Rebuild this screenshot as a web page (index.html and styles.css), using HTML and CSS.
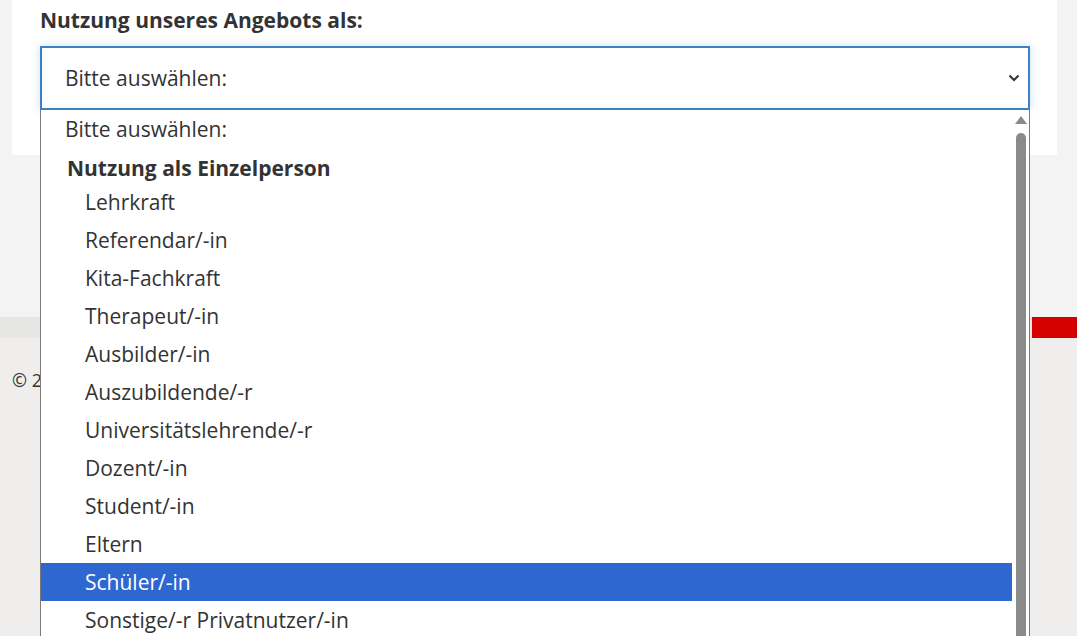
FILE: index.html
```html
<!DOCTYPE html>
<html lang="de">

<head>
    <meta charset="UTF-8">
    <meta name="viewport" content="width=device-width, initial-scale=1.0">
    <title>Registrierung</title>
    <link rel="stylesheet" href="styles.css">
</head>

<body>
    <main class="page">
        <section class="card">
            <label class="field-label" for="usage">Nutzung unseres Angebots als:</label>

            <div class="select-wrap">
                <div class="select" id="usage" role="combobox" aria-expanded="true">
                    <span class="select-value">Bitte auswählen:</span>
                    <svg class="select-arrow" width="12" height="8" viewBox="0 0 12 8">
                        <path d="M1.5 1.5 L6 6 L10.5 1.5" fill="none" stroke="#333" stroke-width="2" />
                    </svg>
                </div>

                <div class="listbox" role="listbox">
                    <div class="options">
                        <div class="option">Bitte auswählen:</div>
                        <div class="optgroup">Nutzung als Einzelperson</div>
                        <div class="option nested">Lehrkraft</div>
                        <div class="option nested">Referendar/-in</div>
                        <div class="option nested">Kita-Fachkraft</div>
                        <div class="option nested">Therapeut/-in</div>
                        <div class="option nested">Ausbilder/-in</div>
                        <div class="option nested">Auszubildende/-r</div>
                        <div class="option nested">Universitätslehrende/-r</div>
                        <div class="option nested">Dozent/-in</div>
                        <div class="option nested">Student/-in</div>
                        <div class="option nested">Eltern</div>
                        <div class="option nested selected">Schüler/-in</div>
                        <div class="option nested">Sonstige/-r Privatnutzer/-in</div>
                    </div>
                    <div class="scrollbar">
                        <span class="scroll-up"></span>
                        <span class="scroll-thumb"></span>
                    </div>
                </div>
            </div>
        </section>
    </main>

    <div class="footer-bar">
        <span class="footer-accent"></span>
    </div>

    <footer class="footer">
        <p>© 2024</p>
    </footer>
</body>

</html>
```

FILE: styles.css
```css
:root {
    --text-color: #333333;
    --page-background: #f3f3f3;
    --footer-background: #efeeec;
    --focus-color: #3d80c3;
    --highlight-color: #2f67d1;
    --accent-color: #d50000;
}

* {
    box-sizing: border-box;
}

body {
    margin: 0;
    font-family: "Open Sans", "Noto Sans", sans-serif;
    color: var(--text-color);
    background: var(--footer-background);
    height: 636px;
    overflow: hidden;
}

.page {
    background: var(--page-background);
    padding: 0 20px 162px 12px;
}

.card {
    background: #ffffff;
    padding: 6px 27px 45px 28px;
}

.field-label {
    display: block;
    font-size: 21px;
    font-weight: 700;
    line-height: 28px;
    margin-bottom: 12px;
}

.select-wrap {
    position: relative;
}

.select {
    display: flex;
    align-items: center;
    justify-content: space-between;
    height: 64px;
    padding: 0 8px 0 23px;
    border: 2px solid var(--focus-color);
    box-shadow: 0 0 8px rgba(61, 128, 195, 0.25);
    font-size: 21px;
    background: #ffffff;
}

/* open dropdown list drawn over the rest of the page */
.listbox {
    position: absolute;
    top: 64px;
    left: 0;
    right: 0;
    height: 540px;
    display: flex;
    background: #ffffff;
    border-left: 1px solid #7a7a7a;
    border-right: 1px solid #7a7a7a;
    overflow: hidden;
    z-index: 10;
}

.options {
    flex: 1;
    font-size: 21px;
}

.option {
    height: 38px;
    line-height: 38px;
    padding-left: 24px;
    white-space: nowrap;
}

.option.nested {
    padding-left: 44px;
}

.optgroup {
    height: 35px;
    line-height: 40px;
    padding-left: 26px;
    font-weight: 700;
}

.option.selected {
    background: var(--highlight-color);
    color: #ffffff;
}

.scrollbar {
    width: 17px;
    display: flex;
    flex-direction: column;
    align-items: center;
    padding-top: 6px;
}

.scroll-up {
    width: 0;
    height: 0;
    border-left: 6px solid transparent;
    border-right: 6px solid transparent;
    border-bottom: 8px solid #8a8a8a;
}

.scroll-thumb {
    width: 10px;
    flex: 1;
    margin-top: 9px;
    background: #8a8a8a;
    border-radius: 5px 5px 0 0;
}

.footer-bar {
    height: 21px;
    background: #e6e6e4;
    display: flex;
    justify-content: flex-end;
}

.footer-accent {
    width: 45px;
    background: var(--accent-color);
}

.footer {
    padding: 30px 12px;
    font-size: 18px;
}

.footer p {
    margin: 0;
}
```
